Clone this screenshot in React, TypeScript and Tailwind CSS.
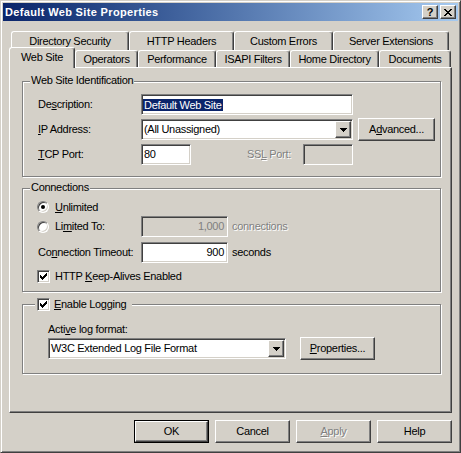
import React from "react";

const raised =
  "border border-t-white border-l-white border-r-[#404040] border-b-[#404040] shadow-[inset_-1px_-1px_#808080]";
const sunken =
  "border border-t-[#808080] border-l-[#808080] border-r-white border-b-white shadow-[inset_1px_1px_#404040,inset_-1px_-1px_#d4d0c8]";
const etched = "border border-[#808080] shadow-[inset_1px_1px_#ffffff,1px_1px_#ffffff]";
const disabledText = "text-[#808080] [text-shadow:1px_1px_0_#ffffff]";

function U({ children }: { children: React.ReactNode }) {
  return <span className="underline underline-offset-[1px]">{children}</span>;
}

function Arrow() {
  return (
    <svg width="7" height="4" viewBox="0 0 7 4">
      <path d="M0 0h7v1H0zM1 1h5v1H1zM2 2h3v1H2zM3 3h1v1H3z" fill="#000" />
    </svg>
  );
}

function Combo({ className, children }: { className: string; children: React.ReactNode }) {
  return (
    <div className={`${sunken} bg-white h-[21px] flex items-center pl-[2px] pr-[1px] ${className}`}>
      <span className="flex-1 whitespace-nowrap">{children}</span>
      <span className={`${raised} bg-[#d4d0c8] w-[16px] h-[17px] flex items-center justify-center`}>
        <Arrow />
      </span>
    </div>
  );
}

function Button({
  className = "",
  children,
  isDefault = false,
}: {
  className?: string;
  children: React.ReactNode;
  isDefault?: boolean;
}) {
  if (isDefault) {
    return (
      <div className={`border border-black h-[23px] ${className}`}>
        <div className={`${raised} bg-[#d4d0c8] h-full flex items-center justify-center`}>{children}</div>
      </div>
    );
  }
  return (
    <div className={`${raised} bg-[#d4d0c8] h-[23px] flex items-center justify-center whitespace-nowrap ${className}`}>
      {children}
    </div>
  );
}

function Radio({ checked }: { checked?: boolean }) {
  return (
    <span className={`${sunken} rounded-full bg-white w-[12px] h-[12px] flex items-center justify-center shrink-0`}>
      {checked && <span className="w-[4px] h-[4px] rounded-full bg-black" />}
    </span>
  );
}

function CheckBox() {
  return (
    <span className={`${sunken} bg-white w-[13px] h-[13px] flex items-center justify-center shrink-0`}>
      <svg width="7" height="7" viewBox="0 0 7 7">
        <path d="M6 0h1v3H6zM5 1h1v3H5zM4 2h1v3H4zM3 3h1v3H3zM2 4h1v3H2zM1 3h1v3H1zM0 2h1v3H0z" fill="#000" />
      </svg>
    </span>
  );
}

function Tab({ w, h, children }: { w: string; h: string; children: React.ReactNode }) {
  return (
    <div
      className={`${w} ${h} shrink-0 bg-[#d4d0c8] border-t border-l border-r border-t-white border-l-white border-r-[#404040] rounded-t-[3px] shadow-[inset_-1px_0_#808080] flex items-center justify-center whitespace-nowrap`}
    >
      {children}
    </div>
  );
}

export default function App() {
  return (
    <div className="w-[461px] h-[453px] bg-[#d4d0c8] border border-t-[#d4d0c8] border-l-[#d4d0c8] border-r-[#404040] border-b-[#404040] shadow-[inset_1px_1px_#ffffff,inset_-1px_-1px_#808080] p-[2px] font-['Liberation_Sans',Arial,sans-serif] text-[11px] leading-[13px] text-black select-none overflow-hidden">
      {/* title bar */}
      <div className="h-[18px] flex items-center bg-linear-to-r from-[#0a246a] to-[#a6caf0] pl-[2px] pr-[2px]">
        <span className="flex-1 font-bold text-white whitespace-nowrap tracking-[0.35px]">Default Web Site Properties</span>
        <div className={`${raised} bg-[#d4d0c8] w-[16px] h-[14px] flex items-center justify-center font-bold leading-[12px]`}>?</div>
        <div className={`${raised} bg-[#d4d0c8] w-[16px] h-[14px] ml-[2px] flex items-center justify-center`}>
          <svg width="8" height="7" viewBox="0 0 8 7">
            <path
              d="M0 0h2v1H0zM6 0h2v1H6zM1 1h2v1H1zM5 1h2v1H5zM2 2h4v1H2zM3 3h2v1H3zM2 4h4v1H2zM1 5h2v1H1zM5 5h2v1H5zM0 6h2v1H0zM6 6h2v1H6z"
              fill="#000"
            />
          </svg>
        </div>
      </div>

      {/* tab control */}
      <div className="mt-[10px] ml-[6px] w-[443px] tracking-[-0.3px]">
        <div className="flex items-start h-[16px] pl-[2px]">
          <Tab w="w-[118px]" h="h-[19px]">Directory Security</Tab>
          <Tab w="w-[105px]" h="h-[19px]">HTTP Headers</Tab>
          <Tab w="w-[99px]" h="h-[19px]">Custom Errors</Tab>
          <Tab w="w-[116px]" h="h-[19px]">Server Extensions</Tab>
        </div>
        <div className="flex items-end h-[20px]">
          <div className="relative z-10 w-[66px] h-[21px] mb-[-1px] shrink-0 bg-[#d4d0c8] border-t border-l border-r border-t-white border-l-white border-r-[#404040] rounded-t-[3px] shadow-[inset_-1px_0_#808080] flex items-center justify-center pb-[2px]">
            Web Site
          </div>
          <Tab w="w-[63px]" h="h-[17px]">Operators</Tab>
          <Tab w="w-[78px]" h="h-[17px]">Performance</Tab>
          <Tab w="w-[74px]" h="h-[17px]">ISAPI Filters</Tab>
          <Tab w="w-[89px]" h="h-[17px]">Home Directory</Tab>
          <Tab w="w-[72px]" h="h-[17px]">Documents</Tab>
        </div>

        {/* panel */}
        <div className={`${raised} h-[346px] pt-[13px] pl-[12px] flex flex-col`}>
          {/* Web Site Identification */}
          <div className={`relative ${etched} w-[419px] h-[96px] pt-[12px] pl-[15px]`}>
            <span className="absolute left-[7px] top-[-8px] px-[1px] bg-[#d4d0c8]">Web Site Identification</span>
            <div className="flex items-center h-[21px]">
              <span className="w-[103px]">
                De<U>s</U>cription:
              </span>
              <div className={`${sunken} bg-white w-[212px] h-[21px] flex items-center pl-[1px]`}>
                <span className="bg-[#0a246a] text-white px-[1px] leading-[12px]">Default Web Site</span>
              </div>
            </div>
            <div className="flex items-center h-[21px] mt-[4px]">
              <span className="w-[103px]">
                <U>I</U>P Address:
              </span>
              <Combo className="w-[212px]">(All Unassigned)</Combo>
              <Button className="w-[77px] ml-[5px]">
                A<U>d</U>vanced...
              </Button>
            </div>
            <div className="flex items-center h-[21px] mt-[4px]">
              <span className="w-[103px]">
                <U>T</U>CP Port:
              </span>
              <div className={`${sunken} bg-white w-[50px] h-[21px] flex items-center pl-[2px]`}>80</div>
              <span className={`w-[56px] ml-[56px] ${disabledText}`}>
                SS<U>L</U> Port:
              </span>
              <div className={`${sunken} bg-[#d4d0c8] w-[50px] h-[21px]`} />
            </div>
          </div>

          {/* Connections */}
          <div className={`relative ${etched} w-[419px] h-[104px] mt-[11px] pt-[10px] pl-[14px]`}>
            <span className="absolute left-[7px] top-[-8px] px-[1px] bg-[#d4d0c8]">Connections</span>
            <div className="flex items-center h-[16px]">
              <Radio checked />
              <span className="ml-[6px]">
                <U>U</U>nlimited
              </span>
            </div>
            <div className="flex items-center h-[21px] mt-[1px]">
              <div className="w-[104px] flex items-center">
                <Radio />
                <span className="ml-[6px]">
                  Li<U>m</U>ited To:
                </span>
              </div>
              <div className={`${sunken} bg-[#d4d0c8] w-[87px] h-[21px] flex items-center justify-end pr-[3px] text-[#808080]`}>
                1,000
              </div>
              <span className={`ml-[4px] ${disabledText}`}>connections</span>
            </div>
            <div className="flex items-center h-[21px] mt-[5px]">
              <span className="w-[104px] pl-[1px]">
                Co<U>n</U>nection Timeout:
              </span>
              <div className={`${sunken} bg-white w-[87px] h-[21px] flex items-center justify-end pr-[3px]`}>900</div>
              <span className="ml-[4px]">seconds</span>
            </div>
            <div className="flex items-center h-[13px] mt-[7px]">
              <CheckBox />
              <span className="ml-[5px]">
                HTTP <U>K</U>eep-Alives Enabled
              </span>
            </div>
          </div>

          {/* Logging */}
          <div className={`relative ${etched} w-[419px] h-[70px] mt-[12px] pt-[18px] pl-[25px]`}>
            <span className="absolute left-[12px] top-[-7px] pl-[2px] pr-[6px] bg-[#d4d0c8] flex items-center h-[13px]">
              <CheckBox />
              <span className="ml-[4px]">
                <U>E</U>nable Logging
              </span>
            </span>
            <div className="h-[13px]">
              Acti<U>v</U>e log format:
            </div>
            <div className="flex items-center h-[23px] mt-[1px]">
              <Combo className="w-[238px]">W3C Extended Log File Format</Combo>
              <Button className="w-[75px] ml-[14px]">
                <U>P</U>roperties...
              </Button>
            </div>
          </div>
        </div>
      </div>

      {/* dialog buttons */}
      <div className="flex justify-end gap-[6px] mt-[7px] pr-[6px] tracking-[-0.3px]">
        <Button isDefault className="w-[75px]">
          OK
        </Button>
        <Button className="w-[75px]">Cancel</Button>
        <Button className={`w-[75px] ${disabledText}`}>
          <U>A</U>pply
        </Button>
        <Button className="w-[75px]">Help</Button>
      </div>
    </div>
  );
}
